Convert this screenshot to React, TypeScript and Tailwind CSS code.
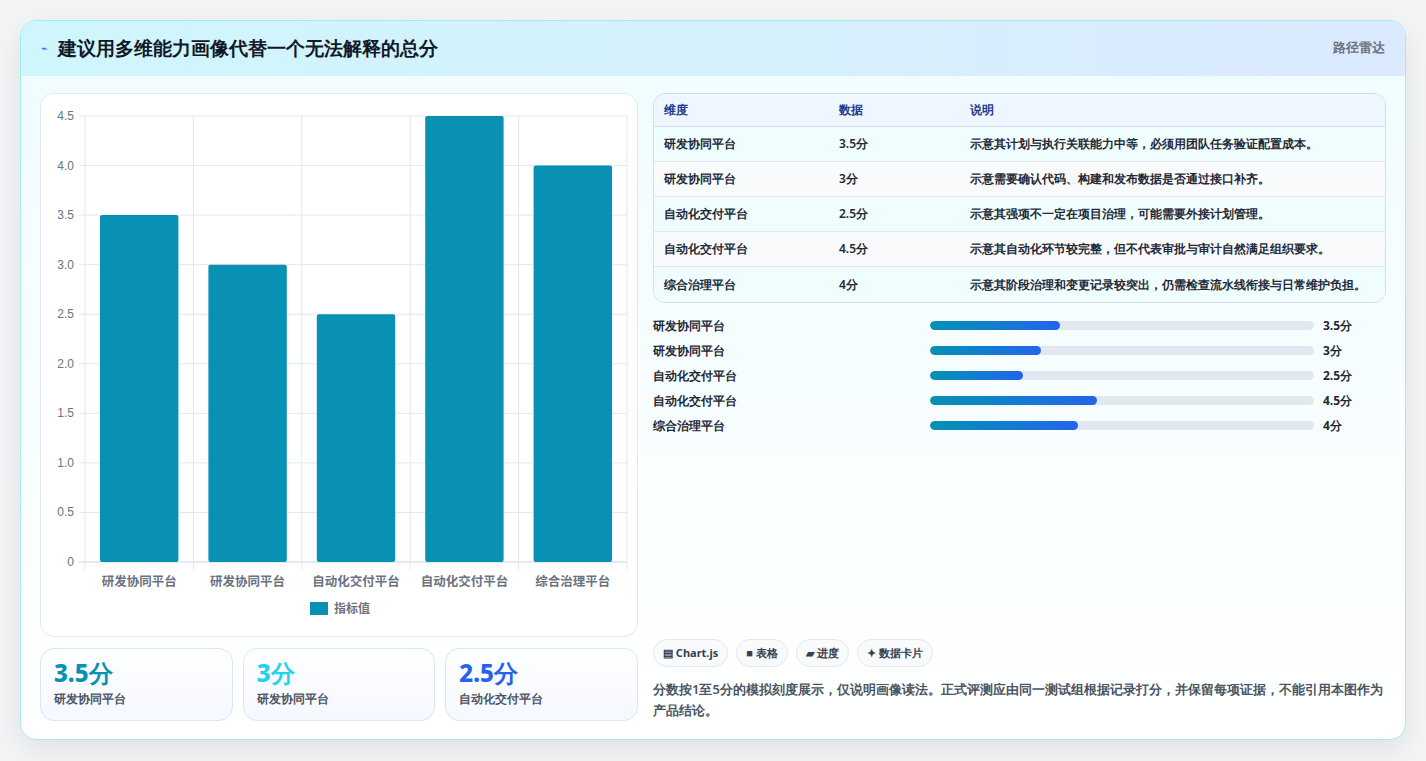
const rows = [
  { name: "研发协同平台", v: 3.5, note: "示意其计划与执行关联能力中等，必须用团队任务验证配置成本。" },
  { name: "研发协同平台", v: 3, note: "示意需要确认代码、构建和发布数据是否通过接口补齐。" },
  { name: "自动化交付平台", v: 2.5, note: "示意其强项不一定在项目治理，可能需要外接计划管理。" },
  { name: "自动化交付平台", v: 4.5, note: "示意其自动化环节较完整，但不代表审批与审计自然满足组织要求。" },
  { name: "综合治理平台", v: 4, note: "示意其阶段治理和变更记录较突出，仍需检查流水线衔接与日常维护负担。" },
];

function BarChart() {
  // plot: x 44..586, y 22..468 in svg coords (card origin 40,93)
  const x0 = 44, x1 = 586, y0 = 468, yTop = 22;
  const unit = (y0 - yTop) / 4.5;
  const cw = (x1 - x0) / 5;
  const ticks = [0, 0.5, 1, 1.5, 2, 2.5, 3, 3.5, 4, 4.5];
  return (
    <svg width="596" height="530" className="block">
      {ticks.map((t) => {
        const y = y0 - t * unit;
        return (
          <g key={t}>
            <line x1={x0 - 6} x2={x1} y1={y} y2={y} stroke={t === 0 ? "#cbd5e1" : "#e5e7eb"} />
            <text x={x0 - 11} y={y + 4} textAnchor="end" fontSize="12" fill="#6b7280" fontFamily="Liberation Sans, sans-serif">
              {t === 0 ? "0" : t.toFixed(1)}
            </text>
          </g>
        );
      })}
      {[0, 1, 2, 3, 4, 5].map((i) => (
        <line key={i} x1={x0 + i * cw} x2={x0 + i * cw} y1={yTop} y2={y0 + 8} stroke="#e5e7eb" />
      ))}
      {rows.map((r, i) => {
        const h = r.v * unit;
        return (
          <g key={i}>
            <rect x={x0 + i * cw + 15} y={y0 - h} width={cw - 30} height={h} rx="2" fill="#0891b2" />
            <text x={x0 + i * cw + cw / 2} y={y0 + 24} textAnchor="middle" fontSize="12.5" fontWeight="600" fill="#6b7280" fontFamily="Noto Sans CJK SC, sans-serif">
              {r.name}
            </text>
          </g>
        );
      })}
      <rect x="269" y="508" width="18" height="13" fill="#0891b2" />
      <text x="293" y="519" fontSize="12" fontWeight="600" fill="#6b7280" fontFamily="Noto Sans CJK SC, sans-serif">指标值</text>
    </svg>
  );
}

export default function App() {
  const kpis = [
    { v: "3.5分", n: "研发协同平台", c: "text-[#0891b2]" },
    { v: "3分", n: "研发协同平台", c: "text-[#22d3ee]" },
    { v: "2.5分", n: "自动化交付平台", c: "text-[#2563eb]" },
  ];
  return (
    <div className="w-[1426px] h-[761px] bg-[#f3f4f6] pt-[20px] pl-[20px] font-['Noto_Sans_CJK_SC','Noto_Sans',sans-serif]">
      <div className="w-[1386px] h-[720px] rounded-[16px] border border-[#a5e9f3] overflow-hidden bg-gradient-to-b from-[#effcff] to-white shadow-[0_10px_30px_rgba(0,0,0,0.08)] flex flex-col">
        <div className="h-[55px] shrink-0 flex items-center justify-between px-[20px] bg-gradient-to-r from-[#cff6fd] to-[#dbeafe] border-b border-[#d6eef5]">
          <div className="flex items-center gap-[10px]">
            <span className="text-[11px] text-[#2563eb]">⌁</span>
            <span className="text-[19px] font-bold text-[#111827]">建议用多维能力画像代替一个无法解释的总分</span>
          </div>
          <span className="text-[13px] font-semibold text-[#6b7280]">路径雷达</span>
        </div>
        <div className="flex-1 flex gap-[15px] px-[19px] pt-[17px] pb-[18px]">
          <div className="w-[598px] flex flex-col gap-[11px]">
            <div className="h-[544px] rounded-[14px] border border-[#e2e8f0] bg-white">
              <BarChart />
            </div>
            <div className="grid grid-cols-3 gap-[10px]">
              {kpis.map((k, i) => (
                <div key={i} className="h-[73px] rounded-[14px] border border-[#dbe6f3] bg-gradient-to-b from-white to-[#f5f8ff] px-[13px] pt-[9px]">
                  <div className={`text-[24px] font-extrabold leading-[30px] ${k.c}`}>{k.v}</div>
                  <div className="text-[12px] font-semibold text-[#4b5563] mt-[2px]">{k.n}</div>
                </div>
              ))}
            </div>
          </div>
          <div className="w-[735px] flex flex-col">
            <div className="rounded-[12px] border border-[#d6dde6] overflow-hidden">
              <div className="h-[33px] flex items-center bg-[#eef6ff] border-b border-[#d6dde6] text-[12px] font-bold text-[#1e3a8a]">
                <span className="w-[175px] pl-[10px]">维度</span>
                <span className="w-[131px] pl-[10px]">数据</span>
                <span className="pl-[10px]">说明</span>
              </div>
              {rows.map((r, i) => (
                <div key={i} className={`h-[35px] flex items-center text-[12px] font-semibold text-[#1f2937] ${i < 4 ? "border-b border-[#e5e7eb]" : ""} ${i % 2 ? "bg-[#f8fafc]" : "bg-[#f0fdff]"}`}>
                  <span className="w-[175px] pl-[10px]">{r.name}</span>
                  <span className="w-[131px] pl-[10px]">{r.v}分</span>
                  <span className="pl-[10px]">{r.note}</span>
                </div>
              ))}
            </div>
            <div className="mt-[13px] flex flex-col gap-[6px]">
              {rows.map((r, i) => (
                <div key={i} className="h-[19px] flex items-center text-[12px] font-semibold text-[#1f2937]">
                  <span className="w-[277px]">{r.name}</span>
                  <div className="w-[384px] h-[9px] rounded-full bg-[#e2e8f0] overflow-hidden">
                    <div className="h-full rounded-full bg-gradient-to-r from-[#0891b2] to-[#2563eb]" style={{ width: `${r.v * 9.65}%` }} />
                  </div>
                  <span className="ml-[9px] font-bold">{r.v}分</span>
                </div>
              ))}
            </div>
            <div className="flex-1" />
            <div className="flex gap-[8px] text-[11px] font-bold text-[#374151]">
              {["▤ Chart.js", "■ 表格", "▰ 进度", "✦ 数据卡片"].map((t) => (
                <span key={t} className="h-[28px] px-[9px] flex items-center rounded-full border border-[#e5e7eb] bg-[#f8fafc]">{t}</span>
              ))}
            </div>
            <p className="mt-[12px] text-[13px] leading-[21px] font-semibold text-[#4b5563]">
              分数按1至5分的模拟刻度展示，仅说明画像读法。正式评测应由同一测试组根据记录打分，并保留每项证据，不能引用本图作为产品结论。
            </p>
          </div>
        </div>
      </div>
    </div>
  );
}
